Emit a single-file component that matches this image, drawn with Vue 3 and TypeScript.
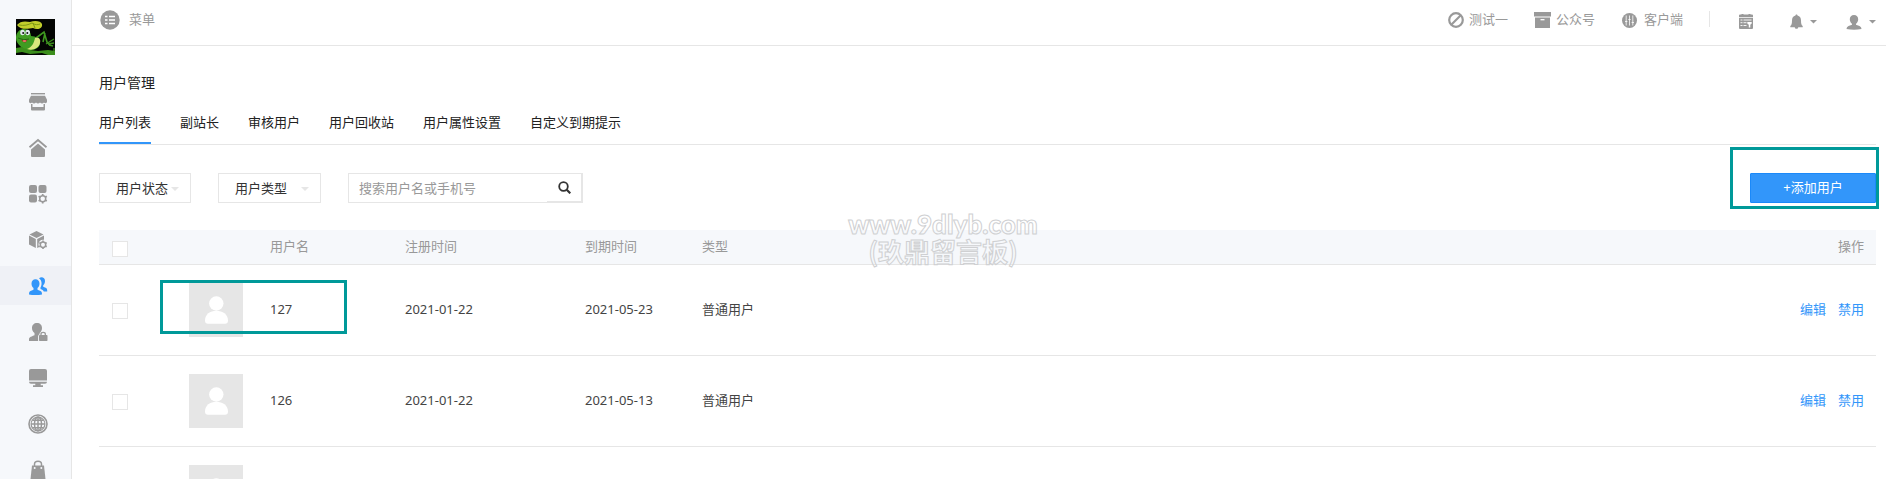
<script setup lang="ts">
import { ref } from 'vue'

interface NavItem {
  label: string
  icon: string
}

interface UserRow {
  name: string
  registered: string
  expires: string
  type: string
  marked?: boolean
}

const nav: NavItem[] = [
  { label: '店铺', icon: 'shop' },
  { label: '首页', icon: 'home' },
  { label: '应用', icon: 'apps' },
  { label: '模块', icon: 'cube' },
  { label: '用户', icon: 'users' },
  { label: '权限', icon: 'lock' },
  { label: '系统', icon: 'screen' },
  { label: '站点', icon: 'globe' },
  { label: '商城', icon: 'bag' },
]
const activeNav = ref('users')

const tabs: string[] = ['用户列表', '副站长', '审核用户', '用户回收站', '用户属性设置', '自定义到期提示']
const activeTab = ref(tabs[0])

const keyword = ref('')

const rows: UserRow[] = [
  { name: '127', registered: '2021-01-22', expires: '2021-05-23', type: '普通用户', marked: true },
  { name: '126', registered: '2021-01-22', expires: '2021-05-13', type: '普通用户' },
  { name: '', registered: '', expires: '', type: '' },
]
</script>

<template>
  <div class="page">
    <aside class="sidebar">
      <svg class="logo" viewBox="0 0 39 36" aria-hidden="true">
        <rect width="39" height="36" fill="#030503" />
        <path d="M0 29l6-1 8 3 8 1 10-1 7 1v4h-7l-6-2-12 1-8-2-6 1z" fill="#3c8f1c" />
        <path d="M20 19l8-6 3 10 3 3M29 14l-2 9" fill="none" stroke="#3f9a20" stroke-width="1.600" />
        <path d="M30 25l8-5M32 25l6-1M33 26l4 1M38 29v6" fill="none" stroke="#3b8c1d" stroke-width="1.300" />
        <path d="M0 19c0-5 3-9 8-9 4 0 7 3 7 7 5 0 9 3 9 7s-4 7-9 7c-7 0-15-5-15-12z" fill="#409c22" />
        <path d="M19 19c4-1 6 1 5 5-1 5-7 8-13 6 5-2 7-6 8-11z" fill="#dbe67e" />
        <path d="M1 6c3-4 8-4 13-3 5-2 11-1 12 2 1 5-5 6-9 4-5 1-13 2-16-3z" fill="#c2cf2c" />
        <path d="M3 6c5 1 9 0 13-2 3 2 6 2 8 1M17 4l2 5" fill="none" stroke="#7f9a13" />
        <ellipse cx="6.500" cy="13.500" rx="2.300" ry="2.800" fill="#dfe9ec" />
        <ellipse cx="11.700" cy="13.500" rx="2.300" ry="2.800" fill="#dfe9ec" />
        <circle cx="7.200" cy="14" r="1" fill="#111" />
        <circle cx="11.300" cy="14" r="1" fill="#111" />
        <path d="M2 19q6 3 11 1" fill="none" stroke="#1f6a12" />
        <path d="M5.500 20.500q3 1 6 0l-2 3q-3 0-4-3z" fill="#9c2a1f" />
        <ellipse cx="8.500" cy="22" rx="1.800" ry="1" fill="#e9746a" />
      </svg>

      <nav class="nav">
        <a
          v-for="item in nav"
          :key="item.icon"
          href="#"
          class="nav-item"
          :class="{ active: item.icon === activeNav }"
          :aria-label="item.label"
          @click.prevent="activeNav = item.icon"
        >
          <svg class="nav-icon" viewBox="0 0 20 20" aria-hidden="true">
            <template v-if="item.icon === 'shop'">
              <rect x="3" y="1" width="14" height="1.400" />
              <path d="M3 3.700h14l2 4v2c0 1.400-2 2-3 .8-1 1.300-3 1.200-4 0-1 1.200-3 1.200-4 0-1 1.300-3 1.200-4 0-1 1.200-3 .6-3-.8v-2z" />
              <path d="M3 12h1.500v3h11v-3H17v5.500q0 1-1 1H4q-1 0-1-1z" />
            </template>
            <template v-else-if="item.icon === 'home'">
              <path d="M1.500 9.300L10 2l8.500 7.300" fill="none" stroke="currentColor" stroke-width="1.800" />
              <path d="M10 5.500l7 6V18q0 1-1 1H4q-1 0-1-1v-6.500z" />
            </template>
            <template v-else-if="item.icon === 'apps'">
              <rect x="1" y="1" width="8" height="8" rx="2" />
              <rect x="10.500" y="1" width="8" height="8" rx="2" />
              <rect x="1" y="10.500" width="8" height="8" rx="2" />
              <circle cx="14.700" cy="14.700" r="3" fill="none" stroke="currentColor" stroke-width="1.500" />
              <path d="M14.700 10v2M14.700 17.500v2M10.600 12.300l1.700 1M17.100 16.100l1.700 1M10.600 17.100l1.700-1M17.100 13.300l1.700-1" stroke="currentColor" stroke-width="1.700" />
            </template>
            <template v-else-if="item.icon === 'cube'">
              <path d="M8.500 1l7 3.400-7 3.600-7-3.600z" />
              <path d="M1 5.500l6.800 3.500v9L1 14.500z" />
              <path d="M9.200 9L16 5.500v4.300c-3-.5-5.500 1.500-5.500 4.500 0 1.200.3 2 .8 2.800L9.200 18z" />
              <circle cx="15" cy="14.700" r="2.700" fill="none" stroke="currentColor" stroke-width="1.500" />
              <path d="M15 10.500v1.800M15 17v1.900M11.300 12.600l1.500.9M17.200 15.900l1.500.9M11.300 16.800l1.500-.9M17.200 13.500l1.500-.9" stroke="currentColor" stroke-width="1.600" />
            </template>
            <template v-else-if="item.icon === 'users'">
              <path d="M11 2.200c2.500-2 6-.8 6 2.700 0 1.800-.7 3.200-1.800 4.300v1.500l3 1.300q1 .5 1 2.500v1h-3.400c-.4-1.300-1.500-2-3.300-2.600v-1.500c1.600-2.500 1.700-6.900-1.500-9.200z" />
              <path d="M7.500 3.200c2.400 0 4 1.600 4 4.300 0 2-.8 3.500-2 4.500v1.700l3 1.300c1.200.5 1.500 1.500 1.500 3.500-3.500.8-9.500.8-13 0 0-2 .3-3 1.500-3.500l3-1.300V12c-1.200-1-2-2.500-2-4.500 0-2.700 1.600-4.300 4-4.300z" />
            </template>
            <template v-else-if="item.icon === 'lock'">
              <path d="M9 1c3 0 5 2 5 5 0 2-.8 3.700-2.400 5v1.300c-1.300.7-1.500 1.700-1.500 3V19H1v-1.500c0-2 1-2.500 5.500-4.300V11C4.800 9.800 4 8 4 6c0-3 2-5 5-5z" />
              <rect x="11" y="13" width="8.500" height="6" rx=".7" />
              <path d="M13 13.500V12c0-2.200 4.300-2.200 4.300 0v1.500" fill="none" stroke="currentColor" stroke-width="1.300" />
            </template>
            <template v-else-if="item.icon === 'screen'">
              <path d="M3 1h14q2 0 2 2v9.500H1V3q0-2 2-2z" />
              <path d="M1 13.700h18q0 2-2 2h-4.300v1.600H15V19H5v-1.700h2.300v-1.600H3q-2 0-2-2z" />
            </template>
            <template v-else-if="item.icon === 'globe'">
              <g fill="none" stroke="currentColor">
                <circle cx="10" cy="10" r="9" stroke-width="1.600" />
                <circle cx="10" cy="10" r="6.900" stroke-width="1.200" />
                <ellipse cx="10" cy="10" rx="3.500" ry="7" stroke-width="1.500" />
                <path d="M10 3v14M3 10h14M4.500 6.300h11M4.500 13.700h11" stroke-width="1.500" />
              </g>
            </template>
            <template v-else>
              <path d="M6.500 6V4.300C6.500.3 13.500.3 13.500 4.300V6" fill="none" stroke="currentColor" stroke-width="1.500" />
              <path d="M4 5.500h12L17.500 19h-15z" />
              <circle cx="6.700" cy="8" r="1" fill="#f6f8fb" />
              <circle cx="13.300" cy="8" r="1" fill="#f6f8fb" />
            </template>
          </svg>
        </a>
      </nav>
    </aside>

    <div class="body">
      <header class="topbar">
        <button type="button" class="top-item menu">
          <svg class="icon-20" viewBox="0 0 20 20" aria-hidden="true">
            <circle cx="10" cy="10" r="9.700" />
            <path d="M5 6.500h2.500M9 6.500h6M5 10h2.500M9 10h6M5 13.500h2.500M9 13.500h6" stroke="#fff" stroke-width="1.500" />
          </svg>
          <span>菜单</span>
        </button>

        <div class="top-right">
          <a href="#" class="top-item gap-5">
            <svg class="icon-16" viewBox="0 0 16 16" aria-hidden="true">
              <circle cx="8" cy="8" r="6.800" fill="none" stroke="currentColor" stroke-width="2.200" />
              <path d="M3.500 12.500l9-9" stroke="currentColor" stroke-width="2.200" />
            </svg>
            <span>测试一</span>
          </a>
          <a href="#" class="top-item gap-5">
            <svg class="icon-17" viewBox="0 0 17 16" aria-hidden="true">
              <path d="M0 0h17v4.500H0zM1 5.500h15V16H1z" />
              <path d="M6.500 7.700h4" stroke="#fff" stroke-width="1.300" />
            </svg>
            <span>公众号</span>
          </a>
          <a href="#" class="top-item gap-7">
            <svg class="icon-16" viewBox="0 0 16 16" aria-hidden="true">
              <circle cx="8.500" cy="8.500" r="7.500" />
              <path d="M5.200 3.500v10M8.500 3.500v10M11.800 3.500v10M4 9.500h2.400M7.300 7.500h2.400M10.600 10.500H13" stroke="#fff" stroke-width=".8" />
            </svg>
            <span>客户端</span>
          </a>
          <i class="divider"></i>
          <button type="button" class="top-item calendar" aria-label="日历">
            <svg class="icon-16" viewBox="0 0 16 16" aria-hidden="true">
              <path d="M2 1.500h1.500V1h2v.5h5V1h2v.5H14q1 0 1 1V4H1V2.500q0-1 1-1zM1 4.800h14V15q0 1-1 1H2q-1 0-1-1z" />
              <path d="M2.500 7h2M5.500 7h8M2.500 9.700h2M5.500 9.700h3M2.500 12.500h2M5.500 12.500h3" stroke="#fff" stroke-width=".9" />
              <path d="M9.300 9h4.400v1.500l-1.400 1.200v2.800h-1.500v-2.800l-1.500-1.200z" fill="#fff" />
            </svg>
          </button>
          <button type="button" class="top-item bell gap-7" aria-label="消息">
            <svg class="icon-13" viewBox="0 0 13 16" aria-hidden="true">
              <path d="M5.500 1.500c0-1.300 2-1.300 2 0 2.500.5 3.500 2.500 3.500 5 0 3 .4 4.500 1.700 5.500v1.300H.3V12C1.600 11 2 9.500 2 6.500c0-2.500 1-4.500 3.500-5zM4.800 13.300h3.400c0 2-3.400 2-3.400 0z" />
            </svg>
            <svg class="caret-7" viewBox="0 0 7 4" aria-hidden="true"><path d="M0 0h7L3.500 3.500z" /></svg>
          </button>
          <button type="button" class="top-item person gap-7" aria-label="账户">
            <svg class="icon-16" viewBox="0 0 16 16" aria-hidden="true">
              <path d="M8 1c2.600 0 4.200 1.800 4.200 4.300 0 1.800-.8 3.500-2.200 4.500v1l3.500 1.200q2 .8 2 3-7.500 1.500-15 0 0-2.200 2-3L6 10.800v-1C4.600 8.800 3.800 7.100 3.800 5.300 3.800 2.800 5.400 1 8 1z" />
            </svg>
            <svg class="caret-7" viewBox="0 0 7 4" aria-hidden="true"><path d="M0 0h7L3.500 3.500z" /></svg>
          </button>
        </div>
      </header>

      <main class="content">
        <h1 class="title">用户管理</h1>

        <nav class="tabs">
          <a
            v-for="tab in tabs"
            :key="tab"
            href="#"
            class="tab"
            :class="{ active: tab === activeTab }"
            @click.prevent="activeTab = tab"
            >{{ tab }}</a
          >
        </nav>

        <div class="filters">
          <div class="picker status">
            <select aria-label="用户状态">
              <option>用户状态</option>
            </select>
            <svg class="picker-caret" viewBox="0 0 8 4" aria-hidden="true"><path d="M0 0h8L4 4z" /></svg>
          </div>
          <div class="picker kind">
            <select aria-label="用户类型">
              <option>用户类型</option>
            </select>
            <svg class="picker-caret" viewBox="0 0 8 4" aria-hidden="true"><path d="M0 0h8L4 4z" /></svg>
          </div>
          <form class="search" @submit.prevent>
            <input v-model="keyword" type="text" placeholder="搜索用户名或手机号" aria-label="搜索用户名或手机号" />
            <button type="submit" aria-label="搜索">
              <svg viewBox="0 0 13 13" aria-hidden="true">
                <circle cx="5.500" cy="5.500" r="4.300" fill="none" stroke="#333" stroke-width="1.800" />
                <path d="M8.700 8.700l3.600 3.600" stroke="#333" stroke-width="2.200" />
              </svg>
            </button>
          </form>
          <div class="add-wrap">
            <button type="button" class="add">+添加用户</button>
            <i class="mark mark-add"></i>
          </div>
        </div>

        <table class="users">
          <colgroup>
            <col class="c-check" />
            <col class="c-avatar" />
            <col class="c-name" />
            <col class="c-registered" />
            <col class="c-expires" />
            <col />
            <col class="c-ops" />
          </colgroup>
          <thead>
            <tr>
              <th class="check"><input type="checkbox" aria-label="全选" /></th>
              <th></th>
              <th>用户名</th>
              <th>注册时间</th>
              <th>到期时间</th>
              <th>类型</th>
              <th class="ops">操作</th>
            </tr>
          </thead>
          <tbody>
            <tr v-for="(row, i) in rows" :key="i">
              <td class="check"><input type="checkbox" :aria-label="row.name" /></td>
              <td class="avatar-cell">
                <svg class="avatar" viewBox="0 0 54 54" aria-hidden="true">
                  <rect width="54" height="54" fill="#e6e6e6" />
                  <circle cx="27.300" cy="20.500" r="7.200" fill="#fff" />
                  <path d="M16 37.500c0-6 5-9.700 11.300-9.700S39 31.500 39 37.500c0 2.300-1 3.300-3 3.300H19c-2 0-3-1-3-3.300z" fill="#fff" />
                </svg>
                <i v-if="row.marked" class="mark mark-user"></i>
              </td>
              <td>{{ row.name }}</td>
              <td>{{ row.registered }}</td>
              <td>{{ row.expires }}</td>
              <td>{{ row.type }}</td>
              <td class="ops">
                <div v-if="row.name" class="links">
                  <a href="#">编辑</a>
                  <a href="#">禁用</a>
                </div>
              </td>
            </tr>
          </tbody>
        </table>
      </main>
    </div>

    <div class="watermark">
      <span class="wm-site">www.9dlyb.com</span>
      <span class="wm-name">(玖鼎留言板)</span>
    </div>
  </div>
</template>

<style>
body {
  margin: 0;
  background: #fff;
}
</style>

<style scoped>
.page {
  position: relative;
  display: flex;
  height: 100vh;
  overflow: hidden;
  font-family: 'Noto Sans', 'Noto Sans CJK SC', sans-serif;
  font-size: 13px;
  line-height: 20px;
  color: #444;
}
.page * {
  box-sizing: border-box;
}
a {
  text-decoration: none;
}
button,
input,
select {
  margin: 0;
  padding: 0;
  border: 0;
  background: none;
  border-radius: 0;
  font: inherit;
  color: inherit;
}
svg {
  display: block;
  flex: none;
  fill: currentColor;
}

.sidebar {
  flex: none;
  width: 72px;
  border-right: 1px solid #e6e6e6;
  background: #f6f8fb;
}
.logo {
  width: 39px;
  height: 36px;
  margin: 19px 0 27px 16px;
}
.nav {
  display: flex;
  flex-direction: column;
  gap: 7px;
}
.nav-item {
  display: flex;
  align-items: center;
  flex: none;
  height: 39px;
  padding-left: 28px;
  color: #999;
}
.nav-item.active {
  background: #eff1f6;
  color: #3296fa;
}
.nav-icon {
  width: 20px;
  height: 20px;
}

.body {
  flex: 1;
  min-width: 0;
}
.topbar {
  display: flex;
  justify-content: space-between;
  height: 46px;
  padding: 0 10px 0 28px;
  border-bottom: 1px solid #e6e6e6;
}
.top-item {
  display: flex;
  align-items: center;
  height: 40px;
  color: #999;
  white-space: nowrap;
}
.top-item span {
  padding-bottom: 3px;
}
.menu {
  gap: 9px;
}
.gap-5 {
  gap: 5px;
}
.gap-7 {
  gap: 7px;
}
.top-right {
  display: flex;
  gap: 26px;
}
.divider {
  width: 1px;
  height: 16px;
  margin-top: 11px;
  background: #e6e6e6;
}
.bell,
.person {
  padding-top: 3px;
}
.calendar {
  padding: 2px 0 0 2px;
}
.bell {
  padding-left: 10px;
}
.person {
  padding-left: 3px;
}
.icon-20 {
  width: 20px;
  height: 20px;
}
.icon-17 {
  width: 17px;
  height: 16px;
}
.icon-16 {
  width: 16px;
  height: 16px;
}
.icon-13 {
  width: 13px;
  height: 16px;
}
.caret-7 {
  width: 7px;
  height: 4px;
}

.content {
  padding: 26px 10px 0 27px;
}
.title {
  margin: 0;
  font-size: 14px;
  font-weight: 400;
  line-height: 22px;
  color: #222;
}
.tabs {
  display: flex;
  gap: 29px;
  margin-top: 18px;
  border-bottom: 1px solid #e6e6e6;
}
.tab {
  height: 32px;
  border-bottom: 2px solid transparent;
  color: #222;
}
.tab.active {
  border-bottom-color: #3296fa;
}

.filters {
  display: flex;
  align-items: flex-start;
  margin-top: 28px;
}
.picker {
  position: relative;
  margin-right: 27px;
}
.picker select {
  appearance: none;
  display: block;
  width: 100%;
  height: 30px;
  padding-left: 16px;
  border: 1px solid #e6e6e6;
  background: #fff;
  color: #333;
}
.status {
  width: 92px;
}
.kind {
  width: 103px;
}
.picker-caret {
  position: absolute;
  top: 14px;
  right: 12px;
  width: 8px;
  height: 4px;
  fill: #e6e6e6;
  pointer-events: none;
}
.search {
  display: flex;
  width: 235px;
  height: 30px;
  border: 1px solid #e6e6e6;
}
.search input {
  flex: 1;
  min-width: 0;
  padding-left: 10px;
  outline: 0;
}
.search input::placeholder {
  color: #999;
  opacity: 1;
}
.search button {
  display: flex;
  align-items: center;
  width: 35px;
  padding-left: 11px;
  border-right: 1px solid #e6e6e6;
  border-bottom: 1px solid #e6e6e6;
}
.search button svg {
  width: 13px;
  height: 13px;
}
.add-wrap {
  position: relative;
  margin-left: auto;
}
.add {
  display: block;
  width: 126px;
  height: 30px;
  padding-bottom: 2px;
  border: 1px solid #1b89f9;
  border-radius: 1px;
  background: #3296fa;
  color: #fff;
}
.mark {
  position: absolute;
  border: 3px solid #009999;
  pointer-events: none;
}
.mark-add {
  top: -26px;
  right: -3px;
  bottom: -6px;
  left: -20px;
}
.mark-user {
  top: 15px;
  left: -29px;
  width: 187px;
  height: 54px;
}

.users {
  width: 100%;
  margin-top: 27px;
  border-spacing: 0;
  border-collapse: separate;
  table-layout: fixed;
}
.c-check {
  width: 90px;
}
.c-avatar {
  width: 81px;
}
.c-name {
  width: 135px;
}
.c-registered {
  width: 180px;
}
.c-expires {
  width: 117px;
}
.c-ops {
  width: 120px;
}
.users th,
.users td {
  padding: 0 0 2px;
  border-bottom: 1px solid #e6e6e6;
  text-align: left;
  vertical-align: middle;
}
.users th {
  height: 35px;
  background: #f6f8fb;
  font-weight: 400;
  color: #999;
}
.users td {
  height: 91px;
}
.users th.check {
  padding: 3px 0 0 13px;
}
.users td.check {
  padding: 2px 0 0 13px;
}
.check input {
  appearance: none;
  display: block;
  width: 16px;
  height: 16px;
  border: 1px solid #e6e6e6;
  background: #fff;
}
.users .avatar-cell {
  position: relative;
  padding: 0;
}
.avatar {
  width: 54px;
  height: 54px;
}
.users .ops {
  padding-right: 12px;
  text-align: right;
}
.links {
  display: flex;
  justify-content: flex-end;
  gap: 12px;
}
.links a {
  color: #3296fa;
}

.watermark {
  position: absolute;
  top: 210px;
  right: 0;
  left: 0;
  display: flex;
  flex-direction: column;
  align-items: center;
  color: transparent;
  pointer-events: none;
  -webkit-text-stroke: 1px #cfd0d2;
}
.wm-site {
  font-family: Lato, 'Noto Sans', sans-serif;
  font-size: 26px;
  font-weight: 900;
  line-height: 28px;
}
.wm-name {
  font-family: 'Noto Sans CJK SC', sans-serif;
  font-size: 26px;
  font-weight: 700;
  line-height: 26px;
}
</style>
